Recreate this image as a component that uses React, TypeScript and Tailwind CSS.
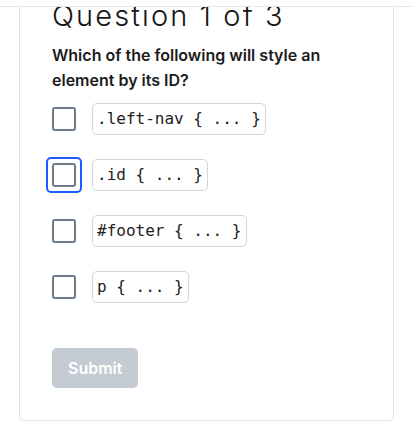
const options = [".left-nav { ... }", ".id { ... }", "#footer { ... }", "p { ... }"];

const Option = ({ code, focused }: { code: string; focused?: boolean }) => {
  return (
    <label className="flex items-center h-8 gap-4">
      <span
        className={
          focused
            ? "flex items-center justify-center w-[36px] h-[36px] -mx-[6px] rounded-[5px] border-2 border-[#1a5cff]"
            : "flex items-center justify-center w-6 h-6"
        }
      >
        <span className="block w-6 h-6 rounded-[3px] border-2 border-[#6f7b88] bg-white" />
      </span>
      <code className="h-8 px-1 rounded-[5px] border border-[#d1d5db] font-['DejaVu_Sans_Mono',monospace] text-[16px] leading-[30px] text-[#222]">
        {code}
      </code>
    </label>
  );
};

export default function App() {
  return (
    <div className="w-[412px] h-[448px] bg-white font-['Inter',sans-serif] overflow-hidden">
      <div className="h-[7px] border-b border-[#e5e7eb]" />
      <div className="mx-[19px] w-[375px] border-x border-b border-[#e3e4e6] rounded-b-[5px] overflow-hidden">
        <div className="px-8 pb-8">
          <h1 className="-mt-[13px] text-[29px] leading-[43px] font-light tracking-[2.1px] text-[#161616]">
            Question 1 of 3
          </h1>
          <p className="mt-[6px] text-[16px] leading-[25px] font-semibold text-[#1b1b1b]">
            Which of the following will style an element by its ID?
          </p>
          <div className="mt-[10px] flex flex-col gap-6">
            {options.map((o, i) => (
              <Option key={o} code={o} focused={i === 1} />
            ))}
          </div>
          <button className="mt-[45px] h-10 px-4 rounded-[5px] bg-[#c4cbd2] text-white text-[16px] font-semibold">
            Submit
          </button>
        </div>
      </div>
    </div>
  );
}
